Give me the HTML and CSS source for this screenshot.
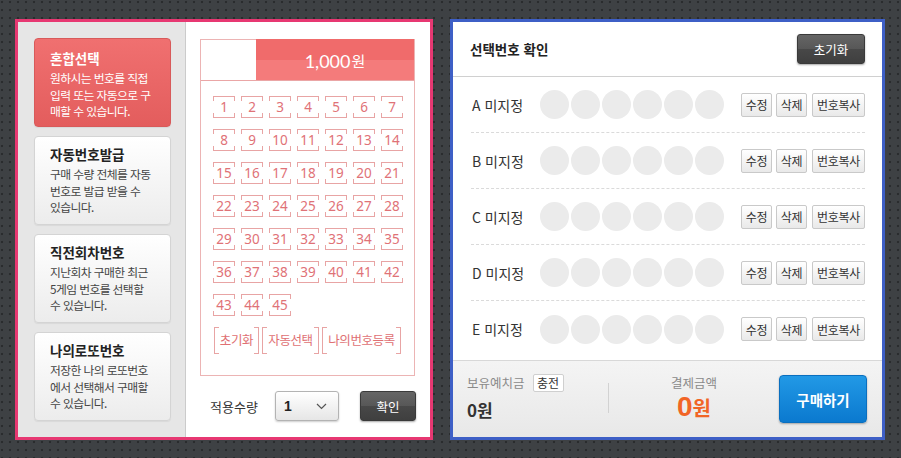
FILE: index.html
```html
<!DOCTYPE html>
<html lang="ko">
<head>
<meta charset="utf-8">
<title>로또 번호 선택</title>
<link rel="stylesheet" href="styles.css">
</head>
<body>
<div class="stage">
  <section class="pick">
    <nav class="modes">
      <div class="mode active"><h3>혼합선택</h3><p>원하시는 번호를 직접<br>입력 또는 자동으로 구<br>매할 수 있습니다.</p></div>
      <div class="mode"><h3>자동번호발급</h3><p>구매 수량 전체를 자동<br>번호로 발급 받을 수<br>있습니다.</p></div>
      <div class="mode"><h3>직전회차번호</h3><p>지난회차 구매한 최근<br>5게임 번호를 선택할<br>수 있습니다.</p></div>
      <div class="mode"><h3>나의로또번호</h3><p>저장한 나의 로또번호<br>에서 선택해서 구매할<br>수 있습니다.</p></div>
    </nav>
    <div class="slip">
      <div class="ticket">
        <div class="ticket-head"><span class="blank"></span><span class="price">1,000<small>원</small></span></div>
        <div class="nums">
          <span>1</span><span>2</span><span>3</span><span>4</span><span>5</span><span>6</span><span>7</span>
          <span>8</span><span>9</span><span>10</span><span>11</span><span>12</span><span>13</span><span>14</span>
          <span>15</span><span>16</span><span>17</span><span>18</span><span>19</span><span>20</span><span>21</span>
          <span>22</span><span>23</span><span>24</span><span>25</span><span>26</span><span>27</span><span>28</span>
          <span>29</span><span>30</span><span>31</span><span>32</span><span>33</span><span>34</span><span>35</span>
          <span>36</span><span>37</span><span>38</span><span>39</span><span>40</span><span>41</span><span>42</span>
          <span>43</span><span>44</span><span>45</span>
        </div>
        <div class="tools"><span class="t-reset">초기화</span><span class="t-auto">자동선택</span><span class="t-mine">나의번호등록</span></div>
      </div>
      <div class="apply">
        <span class="apply-label">적용수량</span>
        <div class="select"><b>1</b><svg width="11" height="7" viewBox="0 0 11 7"><polyline points="1,1 5.5,5.5 10,1" fill="none" stroke="#555" stroke-width="1.2"/></svg></div>
        <button class="dark-btn ok">확인</button>
      </div>
    </div>
  </section>
  <section class="confirm">
    <header class="confirm-head"><h2>선택번호 확인</h2><button class="dark-btn reset">초기화</button></header>
    <ul class="games">
      <li><span class="label">A 미지정</span><span class="balls"><i></i><i></i><i></i><i></i><i></i><i></i></span><span class="acts"><button>수정</button><button>삭제</button><button class="wide">번호복사</button></span></li>
      <li><span class="label">B 미지정</span><span class="balls"><i></i><i></i><i></i><i></i><i></i><i></i></span><span class="acts"><button>수정</button><button>삭제</button><button class="wide">번호복사</button></span></li>
      <li><span class="label">C 미지정</span><span class="balls"><i></i><i></i><i></i><i></i><i></i><i></i></span><span class="acts"><button>수정</button><button>삭제</button><button class="wide">번호복사</button></span></li>
      <li><span class="label">D 미지정</span><span class="balls"><i></i><i></i><i></i><i></i><i></i><i></i></span><span class="acts"><button>수정</button><button>삭제</button><button class="wide">번호복사</button></span></li>
      <li><span class="label">E 미지정</span><span class="balls"><i></i><i></i><i></i><i></i><i></i><i></i></span><span class="acts"><button>수정</button><button>삭제</button><button class="wide">번호복사</button></span></li>
    </ul>
    <footer class="pay">
      <div class="wallet">
        <div class="wallet-top"><span class="cap">보유예치금</span><button class="charge">충전</button></div>
        <div class="wallet-amt">0원</div>
      </div>
      <div class="divider"></div>
      <div class="total">
        <div class="cap">결제금액</div>
        <div class="total-amt"><b>0</b>원</div>
      </div>
      <button class="buy">구매하기</button>
    </footer>
  </section>
</div>
</body>
</html>
```
FILE: styles.css
```css
* { box-sizing: border-box; margin: 0; padding: 0; }
html, body { width: 901px; height: 458px; overflow: hidden; }
body {
  background-color: #3e4144;
  background-image: radial-gradient(circle at 2px 2px, #2a2c2e 0, #2a2c2e 1px, transparent 1.6px);
  background-size: 8px 8px;
  font-family: "Noto Sans CJK KR", "Noto Sans", sans-serif;
  color: #333;
}
button { font-family: inherit; cursor: pointer; }

.stage { display: flex; gap: 17px; padding: 19px 0 0 15px; }

/* left panel */
.pick {
  width: 418px; height: 421px;
  border: 3px solid #e73872;
  background: #fff;
  display: flex;
}
.modes {
  width: 168px; flex: none;
  background: #e6e6e6;
  border-right: 1px solid #cbcbcb;
  padding: 16px 0 0 16px;
  display: flex; flex-direction: column; gap: 9px;
}
.mode {
  width: 137px; height: 89px;
  border: 1px solid #d4d4d4;
  border-radius: 4px;
  background: linear-gradient(#ffffff, #ececec);
  box-shadow: 0 1px 1px rgba(0,0,0,.06);
  padding: 8px 0 0 15px;
}
.mode h3 { font-size: 13.5px; line-height: 18px; font-weight: 700; color: #222; }
.mode p {
  font-size: 11.8px; line-height: 16.5px; letter-spacing: -0.6px;
  color: #444; margin-top: 3px; white-space: nowrap;
}
.mode.active {
  background: linear-gradient(#f07070, #e35d5d);
  border-color: #d85a5a;
  padding-top: 10px;
}
.mode.active h3, .mode.active p { color: #fff; }

.slip { flex: 1; padding: 17px 14px 0 14px; }
.ticket { width: 215px; height: 337px; border: 1px solid #ecb4b4; }
.ticket-head { height: 42px; display: flex; border-bottom: 1px solid #eaa6a6; margin-top: -1px; }
.blank { width: 55px; flex: none; }
.price {
  flex: 1;
  background: linear-gradient(#f06b6b 0, #f06b6b 50%, #f47b7b 50%, #f47b7b 100%);
  color: #fff;
  font-family: Lato, "Noto Sans", sans-serif;
  font-size: 18px;
  display: flex; align-items: center; justify-content: center;
  padding-top: 2px;
}
.price small { font-family: "Noto Sans CJK KR", sans-serif; font-size: 15px; margin-left: 1px; }

.nums {
  display: grid;
  grid-template-columns: repeat(7, 22px);
  column-gap: 6px; row-gap: 11px;
  padding: 15px 0 0 12px;
}
.nums span {
  height: 22px;
  border-top: 1px solid #e8a4a4;
  border-bottom: 1px solid #e8a4a4;
  background:
    linear-gradient(#e8a4a4, #e8a4a4) left top / 1px 4px no-repeat,
    linear-gradient(#e8a4a4, #e8a4a4) right top / 1px 4px no-repeat,
    linear-gradient(#e8a4a4, #e8a4a4) left bottom / 1px 4px no-repeat,
    linear-gradient(#e8a4a4, #e8a4a4) right bottom / 1px 4px no-repeat;
  font-family: "Noto Sans", sans-serif;
  font-size: 13.5px; line-height: 20px;
  text-align: center;
  color: #df7277;
}
.tools { display: flex; gap: 3px; margin: 11px 0 0 13px; }
.tools span {
  height: 27px;
  border-left: 1px solid #e8a4a4;
  border-right: 1px solid #e8a4a4;
  background:
    linear-gradient(#e8a4a4, #e8a4a4) left top / 4px 1px no-repeat,
    linear-gradient(#e8a4a4, #e8a4a4) right top / 4px 1px no-repeat,
    linear-gradient(#e8a4a4, #e8a4a4) left bottom / 4px 1px no-repeat,
    linear-gradient(#e8a4a4, #e8a4a4) right bottom / 4px 1px no-repeat;
  font-size: 12.5px; letter-spacing: -0.4px;
  line-height: 26px;
  text-align: center;
  color: #e07073;
}
.tools .t-reset { width: 45px; }
.tools .t-auto { width: 57px; }
.tools .t-mine { width: 79px; }

.apply { display: flex; align-items: center; height: 30px; margin-top: 15px; }
.apply-label { width: 75px; flex: none; padding-left: 10px; font-size: 13px; color: #333; }
.select {
  width: 64px; height: 30px;
  border: 1px solid #b3b3b3; border-radius: 3px;
  background: linear-gradient(#ffffff, #e6e6e6);
  box-shadow: 0 1px 2px rgba(0,0,0,.2);
  display: flex; align-items: center; justify-content: space-between;
  padding: 0 11px 0 8px;
}
.select b { font-family: "Liberation Sans", Arial, sans-serif; font-size: 14px; color: #222; }
.dark-btn {
  border: 1px solid #3a3a3a; border-radius: 3px;
  background: linear-gradient(#656565 0, #575757 50%, #484848 50%, #3f3f3f 100%);
  box-shadow: 0 1px 2px rgba(0,0,0,.35);
  color: #fff; font-size: 12.5px;
}
.ok { width: 56px; height: 30px; margin-left: auto; }

/* right panel */
.confirm {
  width: 435px; height: 421px;
  border: 3px solid #3e5fc6;
  background: #fff;
  display: flex; flex-direction: column;
}
.confirm-head {
  height: 55px; flex: none;
  border-bottom: 1px solid #d0d0d0;
  display: flex; align-items: center; justify-content: space-between;
  padding: 0 17px 0 17px;
}
.confirm-head h2 { font-size: 13.5px; font-weight: 700; color: #222; }
.reset { width: 68px; height: 30px; }

.games { list-style: none; flex: 1; padding: 0 17px 0 18px; }
.games li {
  height: 56px;
  border-bottom: 1px dashed #dadada;
  display: flex; align-items: center;
}
.games li:last-child { border-bottom: 0; }
.label { width: 69px; flex: none; font-size: 14px; color: #333; padding-left: 1px; }
.balls { display: flex; gap: 2px; }
.balls i { width: 29px; height: 29px; border-radius: 50%; background: #ebebeb; }
.acts { margin-left: auto; display: flex; gap: 4px; }
.acts button {
  width: 31px; height: 24px;
  border: 1px solid #c9c9c9; border-radius: 2px;
  background: linear-gradient(#ffffff, #e9e9e9);
  font-size: 12px; color: #333; letter-spacing: -0.3px;
  padding: 0;
}
.acts button.wide { width: 53px; margin-left: 1px; }

.pay {
  height: 77px; flex: none;
  border-top: 1px solid #d8d8d8;
  background: linear-gradient(#f4f4f4, #e8e8e8);
  display: flex; align-items: flex-start;
  padding: 13px 15px 0 14px;
}
.wallet { width: 141px; flex: none; }
.wallet-top { display: flex; align-items: center; gap: 8px; height: 18px; }
.cap { font-size: 12.5px; color: #8a8a8a; line-height: 18px; }
.charge {
  width: 31px; height: 18px;
  border: 1px solid #cfcfcf; border-radius: 2px;
  background: #fff;
  font-size: 12px; color: #333; padding: 0; line-height: 16px;
}
.wallet-amt { margin-top: 8px; font-size: 17px; font-weight: 700; line-height: 20px; color: #333; }
.divider { width: 1px; height: 30px; background: #d2d2d2; margin-top: 9px; flex: none; }
.total { width: 170px; flex: none; text-align: center; }
.total-amt { color: #f16526; font-weight: 700; font-size: 20px; line-height: 28px; margin-top: 1px; }
.total-amt b { font-family: "Liberation Sans", Arial, sans-serif; font-size: 28px; }
.buy {
  width: 88px; height: 48px; margin-top: 1px; flex: none;
  border: 1px solid #0a6fbf; border-radius: 4px;
  background: linear-gradient(#2299e6, #0b79cf);
  box-shadow: 0 1px 2px rgba(0,0,0,.3);
  color: #fff; font-size: 14.5px; font-weight: 700;
}
```
